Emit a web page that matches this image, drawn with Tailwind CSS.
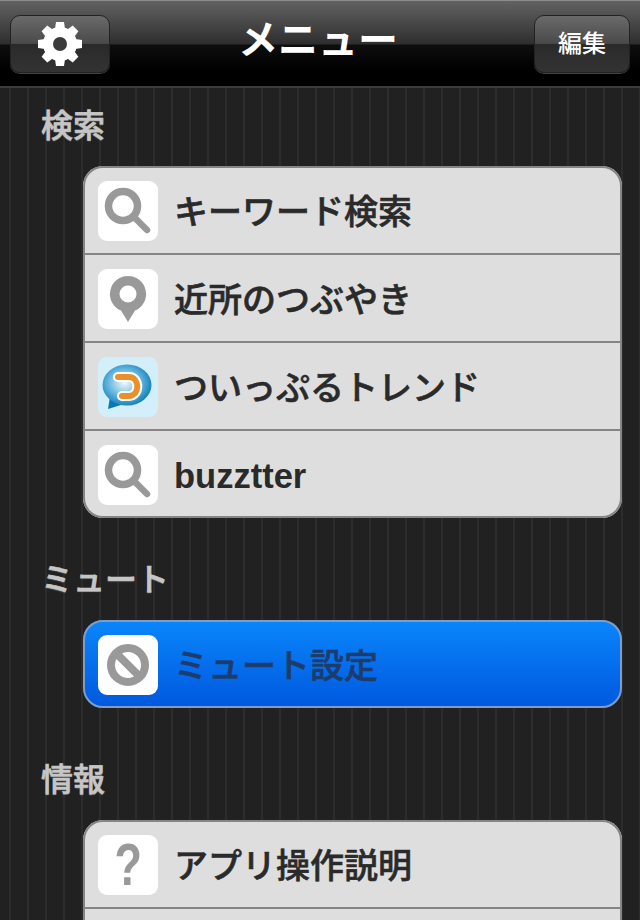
<!DOCTYPE html>
<html lang="ja">

<head>
    <meta charset="UTF-8">
    <title>メニュー</title>
    <script src="https://cdn.jsdelivr.net/npm/@tailwindcss/browser@4"></script>
</head>

<body class="w-[640px] h-[920px] overflow-hidden bg-[#212121] font-['Liberation_Sans','Noto_Sans_CJK_JP',sans-serif]">
    <!-- navigation bar -->
    <header class="h-[88px] flex items-start justify-between px-[10px] pt-[14px] border-t border-[#8c8c8c] border-b-2 border-b-[#3c3c3c] bg-[linear-gradient(#626262_0px,#2e2e2e_43px,#0d0d0d_44px,#000_70px)]">
        <button class="w-[100px] h-[58px] flex items-center justify-center rounded-[10px] border border-[#222] shadow-[0_1px_0_#444] bg-[linear-gradient(#6a6a6a,#4a4a4a_49%,#2a2a2a_50%,#333)]">
            <svg width="46" height="46" viewBox="0 0 46 46">
                <g fill="#fff">
                    <circle cx="23" cy="23" r="17"/>
                    <path d="M18 8L19 1H27L28 8z"/>
                    <path d="M18 8L19 1H27L28 8z" transform="rotate(45 23 23)"/>
                    <path d="M18 8L19 1H27L28 8z" transform="rotate(90 23 23)"/>
                    <path d="M18 8L19 1H27L28 8z" transform="rotate(135 23 23)"/>
                    <path d="M18 8L19 1H27L28 8z" transform="rotate(180 23 23)"/>
                    <path d="M18 8L19 1H27L28 8z" transform="rotate(225 23 23)"/>
                    <path d="M18 8L19 1H27L28 8z" transform="rotate(270 23 23)"/>
                    <path d="M18 8L19 1H27L28 8z" transform="rotate(315 23 23)"/>
                </g>
                <circle cx="23" cy="23" r="7" fill="#3a3a3a"/>
            </svg>
        </button>
        <h1 class="text-[40px] leading-[50px] font-bold text-white -ml-[8px]">メニュー</h1>
        <button class="w-[96px] h-[58px] flex items-center justify-center rounded-[10px] border border-[#222] shadow-[0_1px_0_#444] bg-[linear-gradient(#6a6a6a,#4a4a4a_49%,#2a2a2a_50%,#333)] text-[24px] font-medium text-white">編集</button>
    </header>

    <!-- striped background -->
    <main class="h-[832px] overflow-hidden pl-[83px] pr-[18px] bg-[#212121] bg-[linear-gradient(90deg,transparent_9px,#2c2c2c_9px,#2c2c2c_11px,transparent_11px)] bg-[size:18px_100%]">
        <h2 class="mt-[18px] mb-[20px] -ml-[42px] h-[40px] text-[32px] leading-[40px] font-medium text-[#c6c6c6] [-webkit-text-stroke:0.6px_#c6c6c6] [text-shadow:0_1px_1px_#666]">検索</h2>
        <ul class="rounded-[20px] overflow-hidden bg-[#dedede] outline-2 -outline-offset-2 outline-[#858585]">
            <li class="h-[89px] pt-[15px] pl-[15px] flex items-start gap-[16px] border-b-2 border-[#858585]">
                <div class="w-[60px] h-[60px] rounded-[9px] bg-white">
                    <svg width="60" height="60" viewBox="0 0 60 60" fill="none" stroke="#999">
                        <circle cx="25" cy="25" r="14.5" stroke-width="7.5"/>
                        <line x1="37" y1="37" x2="49" y2="49" stroke-width="6.5" stroke-linecap="round"/>
                    </svg>
                </div>
                <span class="h-[60px] pt-[2px] flex items-center text-[34px] font-medium text-[#2a2a2a] [-webkit-text-stroke:0.6px_#2a2a2a]">キーワード検索</span>
            </li>
            <li class="h-[88px] pt-[14px] pl-[15px] flex items-start gap-[16px] border-b-2 border-[#858585]">
                <div class="w-[60px] h-[60px] rounded-[9px] bg-white">
                    <svg width="60" height="60" viewBox="0 0 60 60">
                        <path fill="#999" d="M30 7a18 18 0 0 1 7 34.6L30 53l-7-11.400A18 18 0 0 1 30 7z"/>
                        <circle cx="30" cy="25" r="8.500" fill="#fff"/>
                    </svg>
                </div>
                <span class="h-[60px] pt-[2px] flex items-center text-[34px] font-medium text-[#2a2a2a] [-webkit-text-stroke:0.6px_#2a2a2a]">近所のつぶやき</span>
            </li>
            <li class="h-[88px] pt-[14px] pl-[15px] flex items-start gap-[16px] border-b-2 border-[#858585]">
                <div class="w-[60px] h-[60px] rounded-[9px] bg-[#d2effa]">
                    <svg width="60" height="60" viewBox="0 0 60 60">
                        <defs>
                            <radialGradient id="bubble" cx="0.45" cy="0.45" r="0.6">
                                <stop offset="0" stop-color="#f0f9fd"/>
                                <stop offset="0.6" stop-color="#5ab0dc"/>
                                <stop offset="1" stop-color="#0a78b4"/>
                            </radialGradient>
                        </defs>
                        <path fill="#0a78b4" d="M12 40L10 52L26 47z"/>
                        <ellipse cx="29" cy="28" rx="24.500" ry="20.500" fill="url(#bubble)"/>
                        <path fill="none" stroke="#fff" stroke-width="10" stroke-linecap="round" stroke-linejoin="round" d="M20 20H31C42 20 42 39 31 39H24"/>
                        <path fill="none" stroke="#e8912a" stroke-width="6" stroke-linecap="round" stroke-linejoin="round" d="M20 20H31C42 20 42 39 31 39H24"/>
                    </svg>
                </div>
                <span class="h-[60px] pt-[2px] flex items-center text-[34px] font-medium text-[#2a2a2a] [-webkit-text-stroke:0.6px_#2a2a2a]">ついっぷるトレンド</span>
            </li>
            <li class="h-[87px] pt-[14px] pl-[15px] flex items-start gap-[16px]">
                <div class="w-[60px] h-[60px] rounded-[9px] bg-white">
                    <svg width="60" height="60" viewBox="0 0 60 60" fill="none" stroke="#999">
                        <circle cx="25" cy="25" r="14.5" stroke-width="7.5"/>
                        <line x1="37" y1="37" x2="49" y2="49" stroke-width="6.5" stroke-linecap="round"/>
                    </svg>
                </div>
                <span class="h-[60px] pt-[4px] flex items-center text-[34.5px] font-bold text-[#2a2a2a]">buzztter</span>
            </li>
        </ul>

        <h2 class="mt-[42px] mb-[20px] -ml-[42px] h-[40px] text-[32px] leading-[40px] font-medium text-[#c6c6c6] [-webkit-text-stroke:0.6px_#c6c6c6] [text-shadow:0_1px_1px_#666]">ミュート</h2>
        <ul class="rounded-[20px] overflow-hidden bg-[linear-gradient(#0a86fb,#0058de)] outline-2 -outline-offset-2 outline-[#7f9cc4]">
            <li class="h-[88px] pt-[15px] pl-[15px] flex items-start gap-[16px]">
                <div class="w-[60px] h-[60px] rounded-[9px] bg-white">
                    <svg width="60" height="60" viewBox="0 0 60 60" fill="none" stroke="#999">
                        <circle cx="30" cy="30" r="17" stroke-width="8"/>
                        <line x1="18" y1="18" x2="42" y2="42" stroke-width="8"/>
                    </svg>
                </div>
                <span class="h-[60px] pt-[2px] flex items-center text-[34px] font-medium text-[#1d3c6e] [-webkit-text-stroke:0.6px_#1d3c6e]">ミュート設定</span>
            </li>
        </ul>

        <h2 class="mt-[52px] mb-[20px] -ml-[42px] h-[40px] text-[32px] leading-[40px] font-medium text-[#c6c6c6] [-webkit-text-stroke:0.6px_#c6c6c6] [text-shadow:0_1px_1px_#666]">情報</h2>
        <ul class="rounded-t-[20px] overflow-hidden bg-[#dedede] outline-2 -outline-offset-2 outline-[#858585]">
            <li class="h-[89px] pt-[15px] pl-[15px] flex items-start gap-[16px] border-b-2 border-[#858585]">
                <div class="w-[60px] h-[60px] rounded-[9px] bg-white flex items-center justify-center text-[60px] leading-[60px] font-bold text-[#999]">
                    <span class="scale-x-75">?</span>
                </div>
                <span class="h-[60px] pt-[2px] flex items-center text-[34px] font-medium text-[#2a2a2a] [-webkit-text-stroke:0.6px_#2a2a2a]">アプリ操作説明</span>
            </li>
            <li class="h-[88px]"></li>
        </ul>
    </main>
</body>

</html>
